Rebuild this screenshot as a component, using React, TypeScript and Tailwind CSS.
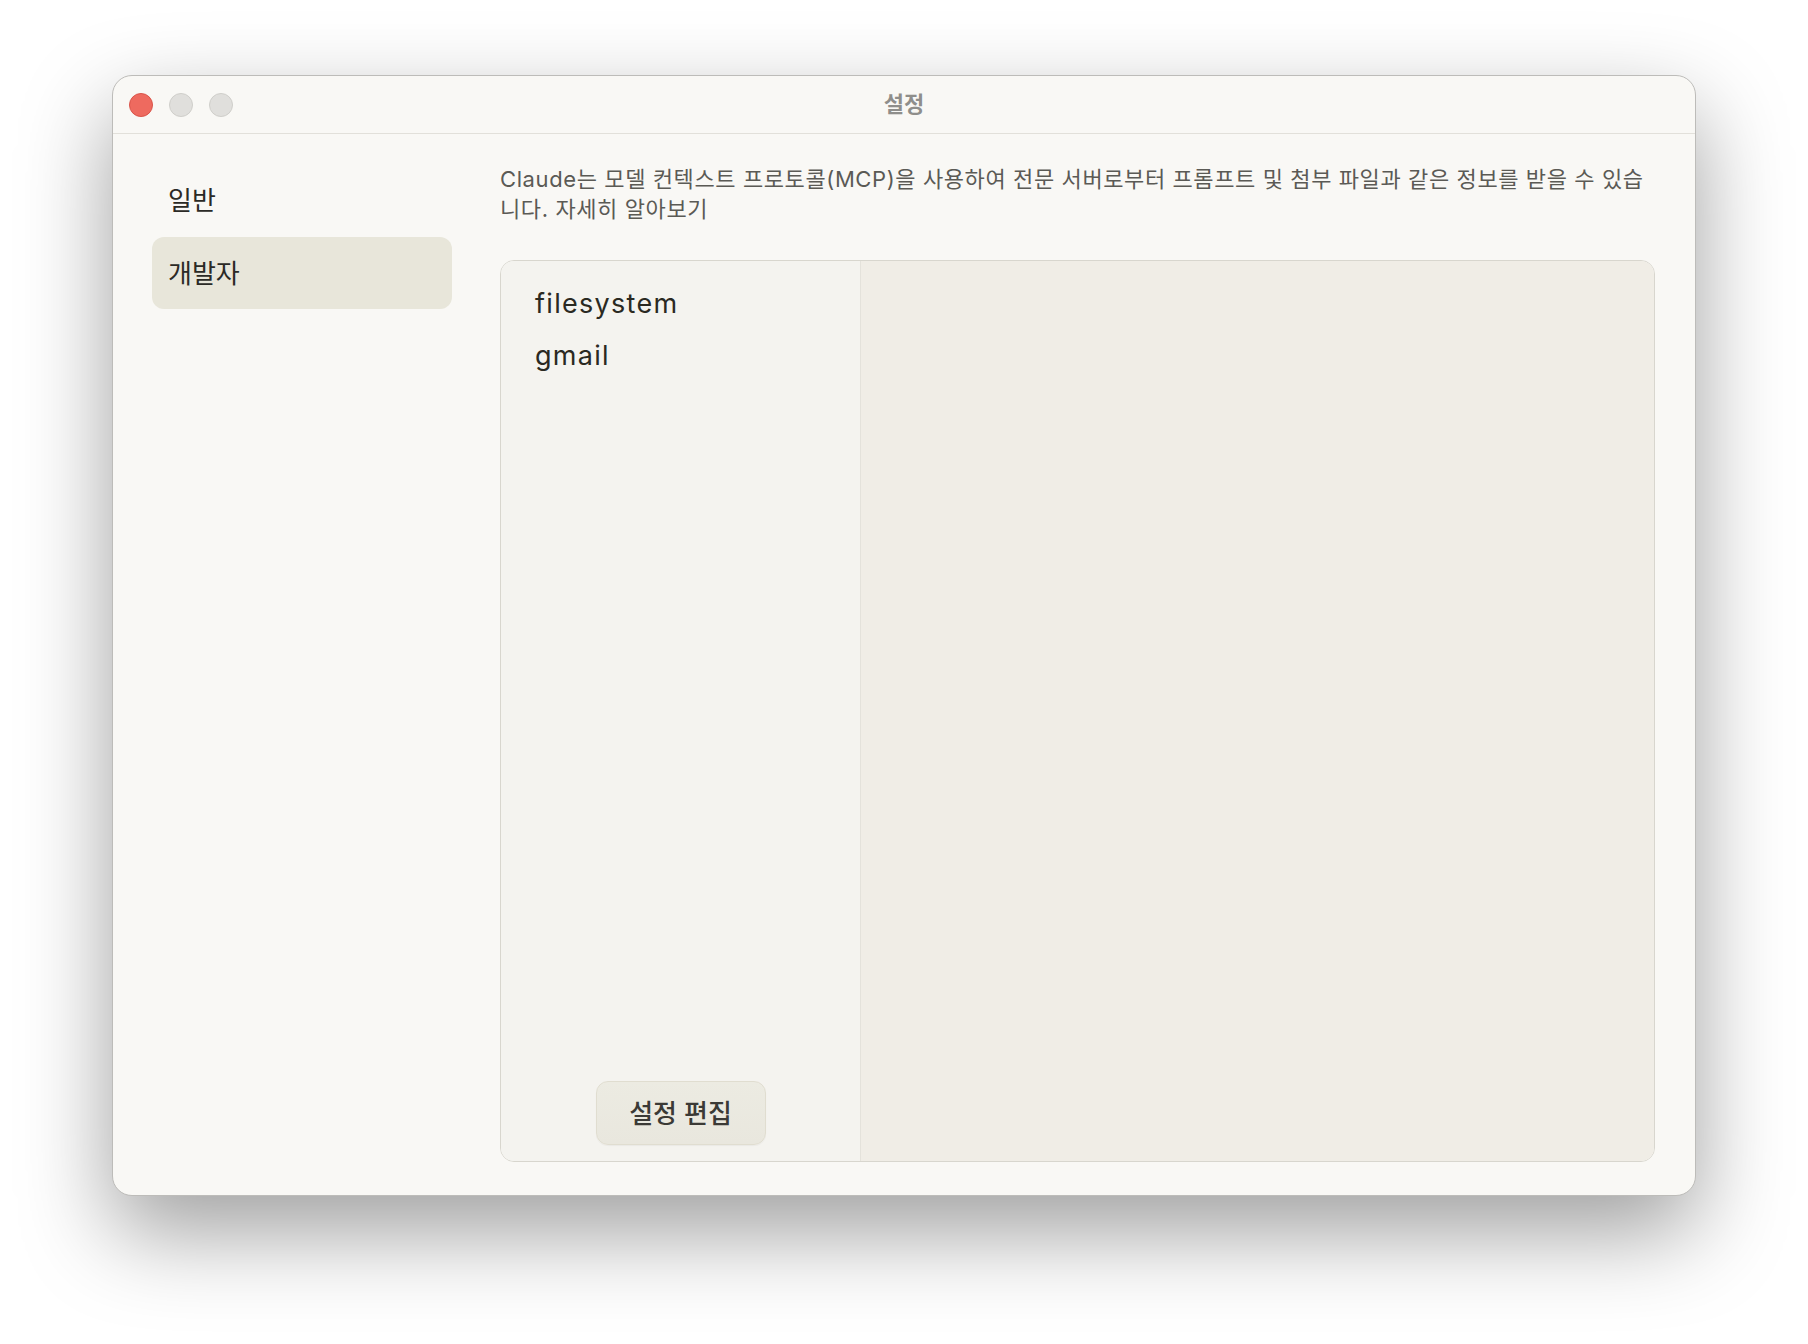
import React from 'react'

const FONT = { fontFamily: '"Inter", "Noto Sans CJK KR", sans-serif' }

function TrafficLights() {
  return (
    <div className="flex items-center gap-4">
      <span className="h-6 w-6 rounded-full border border-[#d9544a] bg-[#ee6a5f]" />
      <span className="h-6 w-6 rounded-full border border-[#cfceca] bg-[#e0dfdc]" />
      <span className="h-6 w-6 rounded-full border border-[#cfceca] bg-[#e0dfdc]" />
    </div>
  )
}

export default function App() {
  const sections = ['일반', '개발자']
  const active = '개발자'
  const servers = ['filesystem', 'gmail']

  return (
    <div className="min-h-screen w-full bg-white pt-[75px]" style={FONT}>
      <div className="mx-auto flex h-[1121px] w-[1584px] flex-col overflow-hidden rounded-[20px] border border-[#bdbcb9] bg-[#f9f8f5] shadow-[0_36px_90px_rgba(0,0,0,0.38)]">
        {/* title bar */}
        <div className="relative flex h-[58px] shrink-0 items-center border-b border-[#e2e0da] px-4">
          <TrafficLights />
          <div className="absolute inset-x-0 top-0 flex h-full items-center justify-center text-[22px] font-bold text-[#8f8e8b]">
            설정
          </div>
        </div>

        <div className="flex min-h-0 flex-1 pt-[27px] pb-[33px] pl-[39px] pr-[40px]">
          {/* sidebar */}
          <div className="flex w-[300px] shrink-0 flex-col gap-px pt-[3px]">
            {sections.map((s) => (
              <div
                key={s}
                className={`flex h-[72px] items-center rounded-xl px-4 text-[26px] text-[#2b2a26] ${
                  s === active ? 'bg-[#e8e6da]' : ''
                }`}
              >
                {s}
              </div>
            ))}
          </div>

          {/* content */}
          <div className="ml-12 flex min-w-0 flex-1 flex-col">
            <p className="pt-[3px] text-[22px] leading-[30px] tracking-[0.6px] text-[#5b5a55]">
              <span className="block whitespace-nowrap">
                Claude는 모델 컨텍스트 프로토콜(MCP)을 사용하여 전문 서버로부터 프롬프트 및 첨부 파일과 같은 정보를 받을 수 있습
              </span>
              <span className="block">니다. 자세히 알아보기</span>
            </p>

            <div className="mt-[36px] flex min-h-0 flex-1 overflow-hidden rounded-[14px] border border-[#d8d6ce]">
              <div className="flex w-[360px] shrink-0 flex-col border-r border-[#e4e2db] bg-[#f4f3ef]">
                <div className="flex flex-col pt-[17px]">
                  {servers.map((s) => (
                    <div key={s} className="flex h-[52px] items-center px-[34px] text-[27px] tracking-[1.3px] text-[#2a2922]">
                      {s}
                    </div>
                  ))}
                </div>
                <div className="mt-auto flex justify-center pb-[16px]">
                  <button className="h-16 w-[170px] rounded-xl border border-[#e0ddd0] bg-gradient-to-b from-[#ecebe2] to-[#e9e7de] text-[26px] font-medium text-[#3b3a36] shadow-[0_1px_1px_rgba(0,0,0,0.04)]">
                    설정 편집
                  </button>
                </div>
              </div>
              <div className="flex-1 bg-[#f0ede6]" />
            </div>
          </div>
        </div>
      </div>
    </div>
  )
}
